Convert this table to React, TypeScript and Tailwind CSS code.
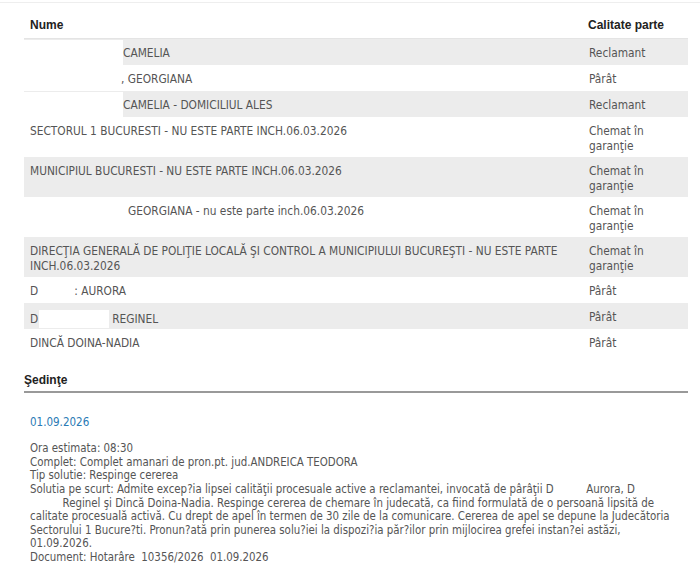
type Row = {
  name: React.ReactNode;
  role: React.ReactNode;
  gray?: boolean;
  tall?: boolean;
};

const two = (a: string, b: string) => (
  <>
    {a}
    <br />
    {b}
  </>
);

const ROWS: Row[] = [
  {
    name: (
      <span className="flex h-full items-stretch">
        <span className="-my-[6px] -ml-[6px] w-[99px] shrink-0 bg-white" />
        <span>CAMELIA</span>
      </span>
    ),
    role: "Reclamant",
    gray: true,
  },
  {
    name: <span className="pl-[91px]">, GEORGIANA</span>,
    role: "Pârât",
  },
  {
    name: (
      <span className="flex h-full items-stretch">
        <span className="-my-[6px] -ml-[6px] w-[99px] shrink-0 bg-white" />
        <span>CAMELIA - DOMICILIUL ALES</span>
      </span>
    ),
    role: "Reclamant",
    gray: true,
  },
  {
    name: "SECTORUL 1 BUCURESTI - NU ESTE PARTE INCH.06.03.2026",
    role: two("Chemat în", "garanţie"),
    tall: true,
  },
  {
    name: "MUNICIPIUL BUCURESTI - NU ESTE PARTE INCH.06.03.2026",
    role: two("Chemat în", "garanţie"),
    gray: true,
    tall: true,
  },
  {
    name: <span className="pl-[98px]">GEORGIANA - nu este parte inch.06.03.2026</span>,
    role: two("Chemat în", "garanţie"),
    tall: true,
  },
  {
    name: two(
      "DIRECŢIA GENERALĂ DE POLIŢIE LOCALĂ ŞI CONTROL A MUNICIPIULUI BUCUREŞTI - NU ESTE PARTE",
      "INCH.06.03.2026"
    ),
    role: two("Chemat în", "garanţie"),
    gray: true,
    tall: true,
  },
  {
    name: (
      <span>
        D<span className="inline-block w-[36px]" />: AURORA
      </span>
    ),
    role: "Pârât",
  },
  {
    name: (
      <span className="flex items-center">
        D<span className="ml-[1px] mr-[3px] inline-block h-[18px] w-[70px] bg-white" />
        REGINEL
      </span>
    ),
    role: "Pârât",
    gray: true,
  },
  {
    name: "DINCĂ DOINA-NADIA",
    role: "Pârât",
  },
];

export default function App() {
  return (
    <div
      className="min-h-[574px] w-[700px] bg-white text-[11.8px] text-[#555]"
      style={{ fontFamily: '"DejaVu Sans Condensed", Tahoma, "DejaVu Sans", sans-serif' }}
    >
      <div className="h-[3px] border-b border-[#eee]" />

      <div className="ml-[24px] mr-[12px]">
        {/* header */}
        <div className="flex h-[36px] items-center border-b border-[#e4e4e4] pt-[8px] text-[12px] font-bold text-[#222] [font-family:'Liberation_Sans',Arial,sans-serif]">
          <div className="flex-1 pl-[6px]">Nume</div>
          <div className="w-[106px] pl-[6px]">Calitate parte</div>
        </div>

        {ROWS.map((r, i) => (
          <div
            key={i}
            className={`flex leading-[15px] ${r.tall ? "h-[40px]" : "h-[26px]"} ${r.gray ? "bg-[#ececec]" : ""}`}
          >
            <div className="flex-1 pb-[6px] pt-[7px] pl-[6px] pr-[14px]">{r.name}</div>
            <div className="w-[106px] pb-[6px] pt-[7px] pl-[7px]">{r.role}</div>
          </div>
        ))}

        {/* sedinte */}
        <div className="mt-[16px] border-b-2 border-[#999] pb-[2px] text-[12px] font-bold text-[#222] [font-family:'Liberation_Sans',Arial,sans-serif]">
          Şedinţe
        </div>

        <div className="pl-[6px]">
          <div className="mt-[21px] text-[11.5px] text-[#2a7ab5]">01.09.2026</div>
          <div className="mt-[11px] whitespace-nowrap text-[11.4px] leading-[13.6px]">
            <div>Ora estimata: 08:30</div>
            <div>Complet: Complet amanari de pron.pt. jud.ANDREICA TEODORA</div>
            <div>Tip solutie: Respinge cererea</div>
            <div className="whitespace-pre">
              {"Solutia pe scurt: Admite excep?ia lipsei calităţii procesuale active a reclamantei, invocată de pârâţii D          Aurora, D"}
            </div>
            <div className="whitespace-pre">
              {"          Reginel şi Dincă Doina-Nadia. Respinge cererea de chemare în judecată, ca fiind formulată de o persoană lipsită de"}
            </div>
            <div>
              calitate procesuală activă. Cu drept de apel în termen de 30 zile de la comunicare. Cererea de apel se depune la Judecătoria
            </div>
            <div>
              Sectorului 1 Bucure?ti. Pronun?ată prin punerea solu?iei la dispozi?ia păr?ilor prin mijlocirea grefei instan?ei astăzi,
            </div>
            <div>01.09.2026.</div>
            <div className="whitespace-pre">{"Document: Hotarâre  10356/2026  01.09.2026"}</div>
          </div>
        </div>
      </div>
    </div>
  );
}
